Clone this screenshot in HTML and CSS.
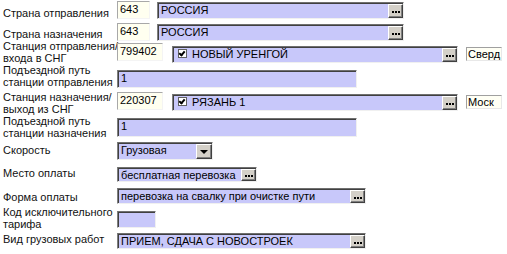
FILE: index.html
```html
<!DOCTYPE html>
<html lang="ru">
<head>
  <meta charset="UTF-8" />
  <title>Маршрут перевозки</title>
  <link rel="stylesheet" href="styles.css">
</head>
<body>
<div class="form">
  <div class="row r1">
    <div class="lbl">Страна отправления</div>
    <div class="code c-short">643</div>
    <div class="lookup w-country"><span class="val">РОССИЯ</span><span class="dots"></span></div>
  </div>
  <div class="row r2">
    <div class="lbl">Страна назначения</div>
    <div class="code c-short">643</div>
    <div class="lookup w-country"><span class="val">РОССИЯ</span><span class="dots"></span></div>
  </div>
  <div class="row r3">
    <div class="lbl">Станция отправления/<br>входа в СНГ</div>
    <div class="code c-long">799402</div>
    <div class="lookup w-station"><span class="val"><i class="chk"></i>НОВЫЙ УРЕНГОЙ</span><span class="dots"></span></div>
    <div class="road">Сверд</div>
  </div>
  <div class="row r4">
    <div class="lbl">Подъездной путь<br>станции отправления</div>
    <div class="edit w-track">1</div>
  </div>
  <div class="row r5">
    <div class="lbl">Станция назначения/<br>выход из СНГ</div>
    <div class="code c-long">220307</div>
    <div class="lookup w-station"><span class="val"><i class="chk"></i>РЯЗАНЬ 1</span><span class="dots"></span></div>
    <div class="road">Моск</div>
  </div>
  <div class="row r6">
    <div class="lbl">Подъездной путь<br>станции назначения</div>
    <div class="edit w-track">1</div>
  </div>
  <div class="row r7">
    <div class="lbl">Скорость</div>
    <div class="combo"><span class="val">Грузовая</span><span class="drop"><i></i></span></div>
  </div>
  <div class="row r8">
    <div class="lbl">Место оплаты</div>
    <div class="lookup w-pay"><span class="val">бесплатная перевозка</span><span class="dots"></span></div>
  </div>
  <div class="row r9">
    <div class="lbl">Форма оплаты</div>
    <div class="lookup w-wide"><span class="val">перевозка на свалку при очистке пути</span><span class="dots"></span></div>
  </div>
  <div class="row r10">
    <div class="lbl">Код исключительного<br>тарифа</div>
    <div class="edit w-tariff"></div>
  </div>
  <div class="row r11">
    <div class="lbl">Вид грузовых работ</div>
    <div class="lookup w-wide"><span class="val">ПРИЕМ, СДАЧА С НОВОСТРОЕК</span><span class="dots"></span></div>
  </div>
</div>
</body>
</html>
```
FILE: styles.css
```css
* { box-sizing: border-box; margin: 0; padding: 0; }
body {
  font-family: "Liberation Sans", Arial, sans-serif;
  font-size: 11px;
  color: #000;
  background: #fff;
  width: 507px;
  height: 254px;
  overflow: hidden;
}

.form { padding-top: 1px; }

.row {
  display: flex;
  align-items: flex-start;
}

.lbl {
  width: 117px;
  padding-left: 3px;
  line-height: 12px;
  white-space: nowrap;
  flex-shrink: 0;
  color: #111;
}

/* yellow code boxes */
.code {
  height: 18px;
  background: #fffff0;
  border: 1px solid;
  border-color: #a8a8a8 #f4f4f4 #f4f4f4 #a8a8a8;
  padding: 1px 2px 0;
  line-height: 12px;
}
.c-short { width: 33px; margin-right: 7px; }
.c-long { width: 46px; margin-right: 9px; }

/* sunken lavender fields */
.lookup, .edit, .combo {
  display: flex;
  height: 17px;
  background: #c8c8fa;
  border: 1px solid;
  border-color: #707070 #f0f0f0 #f0f0f0 #808080;
  box-shadow: inset 1px 1px 0 #404040;
}
.val {
  flex: 1;
  padding: 1px 3px 0;
  line-height: 12px;
  white-space: nowrap;
  overflow: hidden;
  display: flex;
  align-items: flex-start;
}
.edit { padding: 1px 3px 0; line-height: 12px; }

.dots, .drop {
  width: 15px;
  margin-top: 1px;
  background: #d4d0c8;
  border: 1px solid;
  border-color: #fff #404040 #404040 #fff;
  box-shadow: inset -1px -1px 0 #808080;
  display: flex;
  align-items: center;
  justify-content: center;
}
.dots::before {
  content: "";
  width: 2px;
  height: 2px;
  margin: 2px 6px 0 0;
  background: #000;
  box-shadow: 3px 0 0 #000, 6px 0 0 #000;
}

.drop { width: 16px; }
.drop i {
  width: 0; height: 0;
  border-left: 4px solid transparent;
  border-right: 4px solid transparent;
  border-top: 4px solid #000;
}

.chk {
  width: 9px;
  height: 9px;
  margin: 1px 5px 0 2px;
  background: #fff;
  border: 1px solid #606060;
  position: relative;
}
.chk::after {
  content: "";
  position: absolute;
  left: 1px;
  top: 0;
  width: 2px;
  height: 4px;
  border: solid #000;
  border-width: 0 2px 2px 0;
  transform: rotate(40deg);
}

.road {
  width: 36px;
  height: 14px;
  margin-left: 8px;
  background: #fffff4;
  border: 1px solid;
  border-color: #a0a0a0 #e8e8e8 #e8e8e8 #a0a0a0;
  padding: 0 1px;
  line-height: 12px;
  overflow: hidden;
  white-space: nowrap;
}

.w-country { width: 247px; }
.w-station { width: 286px; }
.w-track { width: 240px; height: 18px; }
.w-pay { width: 140px; height: 15px; }
.w-wide { width: 249px; height: 16px; }
.w-tariff { width: 39px; }
.combo { width: 96px; height: 18px; }

/* row geometry */
.r1 { height: 22px; }
.r1 .lbl { margin-top: 6px; }
.r1 .lookup { margin-top: 1px; }

.r2 { height: 17px; }
.r2 .lbl { margin-top: 5px; }
.r2 .lookup { margin-top: 1px; }

.r3 { height: 23px; }
.r3 .code { margin-top: 3px; }
.r3 .lookup { margin-top: 6px; }
.r3 .road { margin-top: 7px; }

.r4 { height: 27px; }
.r4 .lbl { margin-top: 1px; }
.r4 .edit { margin-top: 7px; }

.r5 { height: 24px; }
.r5 .lbl { margin-top: 1px; }
.r5 .code { margin-top: 2px; }
.r5 .lookup { margin-top: 4px; }
.r5 .road { margin-top: 5px; }

.r6 { height: 27px; }
.r6 .lbl { margin-top: 1px; }
.r6 .edit { margin-top: 4px; height: 19px; }

.r7 { height: 24px; }
.r7 .lbl { margin-top: 3px; }
.r7 .combo { margin-top: 1px; }

.r8 { height: 22px; }
.r8 .lbl { margin-top: 2px; }
.r8 .lookup { margin-top: 2px; }

.r9 { height: 18px; }
.r9 .lbl { margin-top: 4px; }
.r9 .lookup { margin-top: 1px; }

.r10 { height: 26px; }
.r10 .lbl { margin-top: 1px; }
.r10 .edit { margin-top: 6px; }

.r11 { height: 20px; }
.r11 .lbl { margin-top: 2px; }
.r11 .lookup { margin-top: 2px; }
```
